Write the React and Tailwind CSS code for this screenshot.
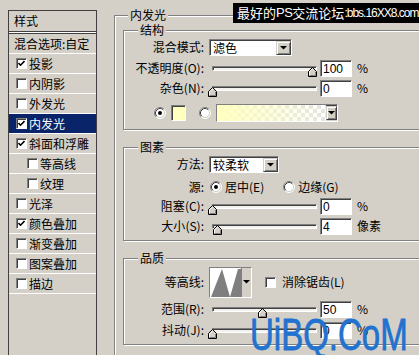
import React from "react";

const sunken =
  "border border-t-[#808080] border-l-[#808080] border-b-white border-r-white shadow-[inset_1px_1px_0_#404040]";

function Check({ checked }) {
  return (
    <span
      className={`w-[11px] h-[11px] bg-white shrink-0 flex items-center justify-center ${sunken}`}
    >
      {checked && (
        <svg width="7" height="7" viewBox="0 0 7 7">
          <polyline points="0.5,3 2.5,5.2 6.5,1" fill="none" stroke="#000" strokeWidth="1.6" />
        </svg>
      )}
    </span>
  );
}

function Radio({ checked }) {
  return (
    <svg width="12" height="12" viewBox="0 0 12 12" className="shrink-0">
      <circle cx="6" cy="6" r="5" fill="#fff" />
      <path d="M2.11 9.89 A5.5 5.5 0 0 1 9.89 2.11" fill="none" stroke="#808080" strokeWidth="1" />
      <path d="M9.89 2.11 A5.5 5.5 0 0 1 2.11 9.89" fill="none" stroke="#ffffff" strokeWidth="1" />
      <path d="M2.82 9.18 A4.5 4.5 0 0 1 9.18 2.82" fill="none" stroke="#404040" strokeWidth="1" />
      <path d="M9.18 2.82 A4.5 4.5 0 0 1 2.82 9.18" fill="none" stroke="#d4d0c8" strokeWidth="1" />
      {checked && <circle cx="6" cy="6" r="2" fill="#000" />}
    </svg>
  );
}

function Arrow() {
  return (
    <svg width="7" height="4" viewBox="0 0 7 4">
      <polygon points="0,0 7,0 3.5,3.5" fill="#000" />
    </svg>
  );
}

function ArrowBtn({ w }) {
  return (
    <div
      className={`${w} h-[14px] mt-[1px] shrink-0 bg-[#d4d0c8] border border-t-[#d4d0c8] border-l-[#d4d0c8] border-b-[#404040] border-r-[#404040] shadow-[inset_1px_1px_0_#fff,inset_-1px_-1px_0_#808080] flex items-center justify-center`}
    >
      <Arrow />
    </div>
  );
}

function Select({ w, text }) {
  return (
    <div className={`${w} h-[17px] flex bg-white ${sunken}`}>
      <span className="flex-1 pl-[3px] text-[12px] leading-[15px]">{text}</span>
      <ArrowBtn w="w-[15px]" />
    </div>
  );
}

function Field({ value }) {
  return (
    <div
      className={`w-[32px] h-[17px] shrink-0 bg-white ${sunken} pl-[2px] pt-[1px] font-['Liberation_Sans',sans-serif] text-[12px] leading-[14px]`}
    >
      {value}
    </div>
  );
}

function Slider({ pos }) {
  return (
    <div className="relative w-[112px] h-[18px] ml-[4px] shrink-0">
      <div className="absolute left-[4px] top-[7px] w-[105px] h-[5px] bg-[#f4f2ee] border border-t-[#808080] border-l-[#808080] border-b-white border-r-white shadow-[inset_1px_1px_0_#404040]" />
      <svg
        className="absolute top-[8px]"
        style={{ left: pos + "px" }}
        width="9"
        height="10"
        viewBox="0 0 9 10"
      >
        <polygon points="4.5,0.5 8.5,4.5 8.5,9.5 0.5,9.5 0.5,4.5" fill="#d4d0c8" stroke="#000" strokeWidth="1" />
        <polyline points="1.5,9 1.5,4.9 4.5,1.9" fill="none" stroke="#fff" strokeWidth="1" />
        <polyline points="1.5,8.5 7.5,8.5 7.5,5" fill="none" stroke="#808080" strokeWidth="1" />
      </svg>
    </div>
  );
}

function Label({ children }) {
  return (
    <span className="w-[80px] shrink-0 text-right text-[12px] leading-[14px] whitespace-nowrap">
      {children}
    </span>
  );
}

function SliderRow({ label, pos, value, unit, cls }) {
  return (
    <div className={`h-[18px] flex items-center ${cls}`}>
      <Label>{label}</Label>
      <Slider pos={pos} />
      <Field value={value} />
      <span className="ml-[5px] text-[12px] leading-[14px]">{unit}</span>
    </div>
  );
}

function Group({ title, cls, children }) {
  return (
    <fieldset
      className={`w-[320px] ml-[8px] px-0 border border-[#808080] shadow-[inset_1px_1px_0_#fff,1px_1px_0_#fff] ${cls}`}
    >
      <legend className="ml-[14px] px-[2px] bg-[#d4d0c8] text-[12px] leading-[16px]">{title}</legend>
      {children}
    </fieldset>
  );
}

function LeftRow({ label, checked, indent, selected }) {
  return (
    <div
      className={`h-[20px] flex items-center gap-[1px] border-b border-white ${
        indent ? "pl-[18px]" : "pl-[7px]"
      } ${selected ? "bg-[#0a246a] text-white" : ""}`}
    >
      <Check checked={checked} />
      <span className="text-[12px] leading-[14px] ml-[1px]">{label}</span>
    </div>
  );
}

const M = ({ c }) => <span>({c})</span>;

export default function App() {
  return (
    <div className="relative w-[419px] h-[355px] overflow-hidden bg-[#d4d0c8] flex text-black font-['Noto_Sans_CJK_SC',sans-serif]">
      {/* left style list */}
      <div className="ml-[8px] mt-[10px] w-[89px] h-[360px] shrink-0 border-x border-t border-[#404040]">
        <div className="h-[21px] pl-[5px] flex items-center border-b border-[#404040] text-[12px]">样式</div>
        <div className="h-[1px] bg-white" />
        <div className="h-[21px] pl-[5px] flex items-center border-t border-[#404040] border-b border-b-white text-[12px] whitespace-nowrap">
          混合选项:自定
        </div>
        <LeftRow label="投影" checked />
        <LeftRow label="内阴影" />
        <LeftRow label="外发光" />
        <LeftRow label="内发光" checked selected />
        <LeftRow label="斜面和浮雕" checked />
        <LeftRow label="等高线" indent />
        <LeftRow label="纹理" indent />
        <LeftRow label="光泽" />
        <LeftRow label="颜色叠加" checked />
        <LeftRow label="渐变叠加" />
        <LeftRow label="图案叠加" />
        <LeftRow label="描边" />
      </div>

      {/* right panel */}
      <fieldset className="ml-[17px] mt-[7px] w-[360px] h-[400px] shrink-0 px-0 border border-[#808080] shadow-[inset_1px_1px_0_#fff,1px_1px_0_#fff]">
        <legend className="ml-[13px] px-[2px] bg-[#d4d0c8] text-[12px] leading-[16px]">内发光</legend>

        <Group title="结构" cls="-mt-[1px] pb-[7px]">
          <div className="h-[18px] flex items-center">
            <Label>混合模式:</Label>
            <div className="ml-[5px]">
              <Select w="w-[83px]" text="滤色" />
            </div>
          </div>
          <SliderRow cls="mt-[3px]" label={<>不透明度<M c="O" />:</>} pos={100} value="100" unit="%" />
          <SliderRow cls="mt-[2px]" label={<>杂色<M c="N" />:</>} pos={0} value="0" unit="%" />
          <div className="h-[18px] mt-[7px] flex items-center">
            <span className="ml-[30px]">
              <Radio checked />
            </span>
            <span className={`ml-[5px] w-[15px] h-[16px] bg-[#ffffc0] ${sunken}`} />
            <span className="ml-[13px]">
              <Radio />
            </span>
            <div className={`ml-[5px] w-[122px] h-[18px] flex ${sunken}`}>
              <div className="flex-1 bg-[image:linear-gradient(to_right,#ffffbf,rgba(255,255,191,0)),conic-gradient(#e4e4e4_25%,#fff_0_50%,#e4e4e4_0_75%,#fff_0)] bg-[length:100%_100%,8px_8px]" />
              <div className="flex">
                <ArrowBtn w="w-[11px]" />
              </div>
            </div>
          </div>
        </Group>

        <Group title="图素" cls="mt-[9px] pb-[5px]">
          <div className="h-[18px] flex items-center">
            <Label>方法:</Label>
            <div className="ml-[5px]">
              <Select w="w-[70px]" text="较柔软" />
            </div>
          </div>
          <div className="h-[18px] mt-[5px] flex items-center text-[12px] leading-[14px]">
            <Label>源:</Label>
            <span className="ml-[6px]">
              <Radio checked />
            </span>
            <span className="ml-[3px]">
              居中<M c="E" />
            </span>
            <span className="ml-[19px]">
              <Radio />
            </span>
            <span className="ml-[3px]">
              边缘<M c="G" />
            </span>
          </div>
          <SliderRow cls="mt-[1px]" label={<>阻塞<M c="C" />:</>} pos={0} value="0" unit="%" />
          <SliderRow cls="mt-[2px]" label={<>大小<M c="S" />:</>} pos={5} value="4" unit="像素" />
        </Group>

        <Group title="品质" cls="mt-[9px] pb-[5px]">
          <div className="h-[32px] flex items-center text-[12px] leading-[14px]">
            <Label>等高线:</Label>
            <div className={`ml-[5px] w-[43px] h-[31px] flex ${sunken}`}>
              <svg width="31" height="29" viewBox="0 0 31 29" className="bg-white shrink-0">
                <polygon points="1,29 12,1 20,29 28,1 31,1 31,29" fill="#7f7f7f" />
              </svg>
              <div className="w-[10px] h-[29px] bg-[#d4d0c8] border-l border-[#808080] flex items-center justify-center">
                <Arrow />
              </div>
            </div>
            <span className="ml-[13px]">
              <Check />
            </span>
            <span className="ml-[6px]">
              消除锯齿<M c="L" />
            </span>
          </div>
          <SliderRow cls="mt-[2px]" label={<>范围<M c="R" />:</>} pos={50} value="50" unit="%" />
          <SliderRow cls="mt-[3px]" label={<>抖动<M c="J" />:</>} pos={0} value="0" unit="%" />
        </Group>
      </fieldset>

      {/* overlays */}
      <div className="absolute left-[233px] top-[3px] h-[20px] pl-[4px] pr-[3px] bg-black text-white text-[13px] leading-[20px] whitespace-nowrap flex items-center">
        <span>最好的</span>
        <span className="font-['Liberation_Sans',sans-serif] text-[13px] tracking-[-0.5px]">PS</span>
        <span>交流论坛</span>
        <span className="font-['Liberation_Sans',sans-serif] text-[12px] tracking-[-1px]">:bbs.16XX8.com</span>
      </div>
      <div className="absolute left-[250px] top-[313px] origin-left scale-x-[0.75] text-[44px] leading-none text-[#2272cf] [-webkit-text-stroke:0.8px_#2272cf] font-['Liberation_Sans',sans-serif] whitespace-nowrap">
        UiBQ.CoM
      </div>
    </div>
  );
}
